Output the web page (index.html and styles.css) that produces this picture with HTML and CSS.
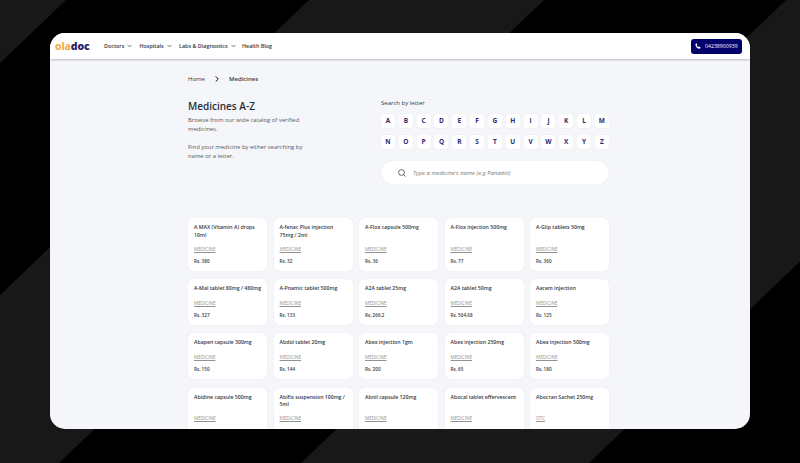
FILE: index.html
```html
<!DOCTYPE html>
<html lang="en">
<head>
<meta charset="utf-8">
<title>Medicines A-Z | oladoc</title>
<link rel="stylesheet" href="styles.css">
</head>
<body>
<svg class="stripes" viewBox="0 0 800 463" aria-hidden="true"><path d="M0 0H66L-419 463H-500zM309 0H544L59 463H-176zM786 0H1074L589 463H301z"/></svg>
<div class="window">
  <header class="navbar">
    <a class="logo"><span class="logo-accent">ola</span>doc</a>
    <nav class="menu">
      <a class="menu-item doctors">Doctors<svg viewBox="0 0 6 4"><path d="M.7.7 3 3.1 5.3.7"/></svg></a>
      <a class="menu-item hospitals">Hospitals<svg viewBox="0 0 6 4"><path d="M.7.7 3 3.1 5.3.7"/></svg></a>
      <a class="menu-item labs">Labs &amp; Diagnostics<svg viewBox="0 0 6 4"><path d="M.7.7 3 3.1 5.3.7"/></svg></a>
      <a class="menu-item">Health Blog</a>
    </nav>
    <a class="phone"><svg viewBox="0 0 24 24"><path d="M6.6 2 2.7 3C2 3.2 1.500 3.800 1.500 4.500 1.500 14.700 9.300 22.500 19.500 22.500c.7 0 1.300-.5 1.500-1.200l1-4.100c.2-.7-.2-1.400-.9-1.700l-4.500-1.900c-.6-.3-1.300-.1-1.700.4l-1.800 2.200C9.900 14.800 8.200 13.100 6.800 9.900L9 8.100c.5-.4.7-1.100.4-1.700L8.300 2.900C8 2.200 7.300 1.800 6.600 2z"/></svg><span>04238900939</span></a>
  </header>
  <main class="page">
    <div class="breadcrumb"><a>Home</a><svg viewBox="0 0 4 6"><path d="M.7.4 3.300 3 .7 5.600"/></svg><b>Medicines</b></div>
    <section class="intro">
      <div class="about">
        <h1>Medicines A-Z</h1>
        <p>Browse from our wide catalog of verified<br>medicines.</p>
        <p>Find your medicine by either searching by<br>name or a letter.</p>
      </div>
      <div class="search">
        <div class="search-label">Search by letter</div>
        <div class="letters">
          <a>A</a><a>B</a><a>C</a><a>D</a><a>E</a><a>F</a><a>G</a><a>H</a><a>I</a><a>J</a><a>K</a><a>L</a><a>M</a>
          <a>N</a><a>O</a><a>P</a><a>Q</a><a>R</a><a>S</a><a>T</a><a>U</a><a>V</a><a>W</a><a>X</a><a>Y</a><a>Z</a>
        </div>
        <div class="search-box"><svg viewBox="0 0 8 8"><circle cx="3.500" cy="3.500" r="2.900"/><path d="m5.600 5.600 2 2"/></svg><span>Type a medicine's name (e.g Panadol)</span></div>
      </div>
    </section>
    <section class="cards">
      <article class="card"><h2>A MAX (Vitamin A) drops<br>10ml</h2><a>MEDICINE</a><b>Rs. 380</b></article>
      <article class="card"><h2>A-fenac Plus injection<br>75mg / 2ml</h2><a>MEDICINE</a><b>Rs. 32</b></article>
      <article class="card"><h2>A-Flox capsule 500mg</h2><a>MEDICINE</a><b>Rs. 36</b></article>
      <article class="card"><h2>A-Flox injection 500mg</h2><a>MEDICINE</a><b>Rs. 77</b></article>
      <article class="card"><h2>A-Glip tablets 50mg</h2><a>MEDICINE</a><b>Rs. 360</b></article>
      <article class="card"><h2>A-Mal tablet 80mg / 480mg</h2><a>MEDICINE</a><b>Rs. 327</b></article>
      <article class="card"><h2>A-Pnamic tablet 500mg</h2><a>MEDICINE</a><b>Rs. 133</b></article>
      <article class="card"><h2>A2A tablet 25mg</h2><a>MEDICINE</a><b>Rs. 266.2</b></article>
      <article class="card"><h2>A2A tablet 50mg</h2><a>MEDICINE</a><b>Rs. 504.68</b></article>
      <article class="card"><h2>Aaram injection</h2><a>MEDICINE</a><b>Rs. 125</b></article>
      <article class="card"><h2>Abapen capsule 300mg</h2><a>MEDICINE</a><b>Rs. 150</b></article>
      <article class="card"><h2>Abdol tablet 20mg</h2><a>MEDICINE</a><b>Rs. 144</b></article>
      <article class="card"><h2>Abex injection 1gm</h2><a>MEDICINE</a><b>Rs. 200</b></article>
      <article class="card"><h2>Abex injection 250mg</h2><a>MEDICINE</a><b>Rs. 65</b></article>
      <article class="card"><h2>Abex injection 500mg</h2><a>MEDICINE</a><b>Rs. 180</b></article>
      <article class="card"><h2>Abidine capsule 500mg</h2><a>MEDICINE</a></article>
      <article class="card"><h2>Abifix suspension 100mg /<br>5ml</h2><a>MEDICINE</a></article>
      <article class="card"><h2>Abnil capsule 120mg</h2><a>MEDICINE</a></article>
      <article class="card"><h2>Abocal tablet effervescent</h2><a>MEDICINE</a></article>
      <article class="card"><h2>Abocran Sachet 250mg</h2><a>OTC</a></article>
    </section>
  </main>
</div>
</body>
</html>
```
FILE: styles.css
```css
* { box-sizing: border-box; }
body {
  margin: 0;
  width: 800px;
  height: 463px;
  overflow: hidden;
  background: #000;
  padding: 33px 50px 0;
  font-family: "Open Sans", "Noto Sans", sans-serif;
  color: #333740;
}
svg { fill: none; stroke: currentColor; flex: none; }
.stripes { position: absolute; left: 0; top: 0; width: 800px; height: 463px; fill: #181818; stroke: none; }
.window {
  position: relative;
  width: 700px;
  height: 395.500px;
  border-radius: 15px;
  overflow: hidden;
  background: #f4f6f9;
}
.navbar {
  display: flex;
  align-items: center;
  height: 26px;
  padding: 0 8px 0 5px;
  background: #fff;
  box-shadow: 0 .5px 2px rgba(0, 0, 0, .22);
}
.logo { width: 49px; font: 800 10.500px/14px "Open Sans", sans-serif; color: #29246a; letter-spacing: -.1px; }
.logo-accent { color: #f5a33c; font-weight: 700; }
.menu { display: flex; flex: 1; font-size: 5.400px; font-weight: 600; }
.menu-item { display: flex; align-items: center; white-space: nowrap; }
.menu-item svg { width: 5px; height: 4px; margin-left: 3px; stroke-width: .8; }
.doctors { width: 35.500px; }
.hospitals { width: 39.500px; }
.labs { width: 63px; }
.phone {
  display: flex;
  align-items: center;
  gap: 4px;
  width: 51px;
  height: 15px;
  padding-left: 4px;
  border-radius: 3px;
  background: #00006b;
  color: #fff;
  font-size: 5.200px;
}
.phone svg { width: 6px; height: 6px; fill: #fff; stroke: none; }
.page { width: 421px; margin-left: 138px; }
.breadcrumb { display: flex; align-items: center; height: 10px; margin-top: 15px; font-size: 6px; }
.breadcrumb svg { width: 4px; height: 6px; margin: 0 10px; color: #111; }
.breadcrumb b { font-weight: 600; }
.intro { display: flex; height: 134px; }
.about { width: 193px; padding-top: 15px; }
h1 { margin: 0 0 3px; font-size: 10px; line-height: 14px; font-weight: 600; color: #2b2f38; }
p { margin: 0 0 9px; font-size: 5.900px; line-height: 9px; color: #565a61; }
.search { width: 228px; padding-top: 14px; }
.search-label { font-size: 6px; line-height: 10px; }
.letters { display: grid; grid-template-columns: repeat(13, 14px); justify-content: space-between; row-gap: 7px; margin-top: 6px; }
.letters a {
  height: 14px;
  border-radius: 2px;
  background: #fff;
  box-shadow: 0 0 1px rgba(0, 0, 60, .14);
  text-align: center;
  font-size: 6.500px;
  line-height: 14px;
  font-weight: 700;
  color: #2e2a70;
}
.search-box {
  display: flex;
  align-items: center;
  gap: 7px;
  height: 23px;
  margin-top: 12px;
  padding-left: 17px;
  border-radius: 12px;
  background: #fff;
  box-shadow: 0 0 1px rgba(0, 0, 60, .14);
  font-size: 5.900px;
  font-style: italic;
  color: #777;
}
.search-box svg { width: 8px; height: 8px; color: #444; stroke-width: .8; }
.cards { display: grid; grid-template-columns: repeat(5, 79px); column-gap: 6.500px; row-gap: 8.500px; grid-template-rows: 52.500px 45.700px 46px 52.500px; }
.card {
  display: flex;
  flex-direction: column;
  padding: 6px 0 6px 6px;
  border-radius: 5px;
  background: #fff;
  box-shadow: 0 0 1px rgba(0, 0, 60, .14);
  white-space: nowrap;
  font-size: 4.600px;
}
.card h2 { flex: 1; margin: 0; font-size: 5.200px; line-height: 7.700px; font-weight: 600; }
.card a { line-height: 6px; text-decoration: underline; color: #929292; text-underline-offset: .5px; }
.card b { margin-top: 6px; line-height: 7px; font-weight: 600; }
.card:nth-child(n + 16) { padding-bottom: 19px; }
```
